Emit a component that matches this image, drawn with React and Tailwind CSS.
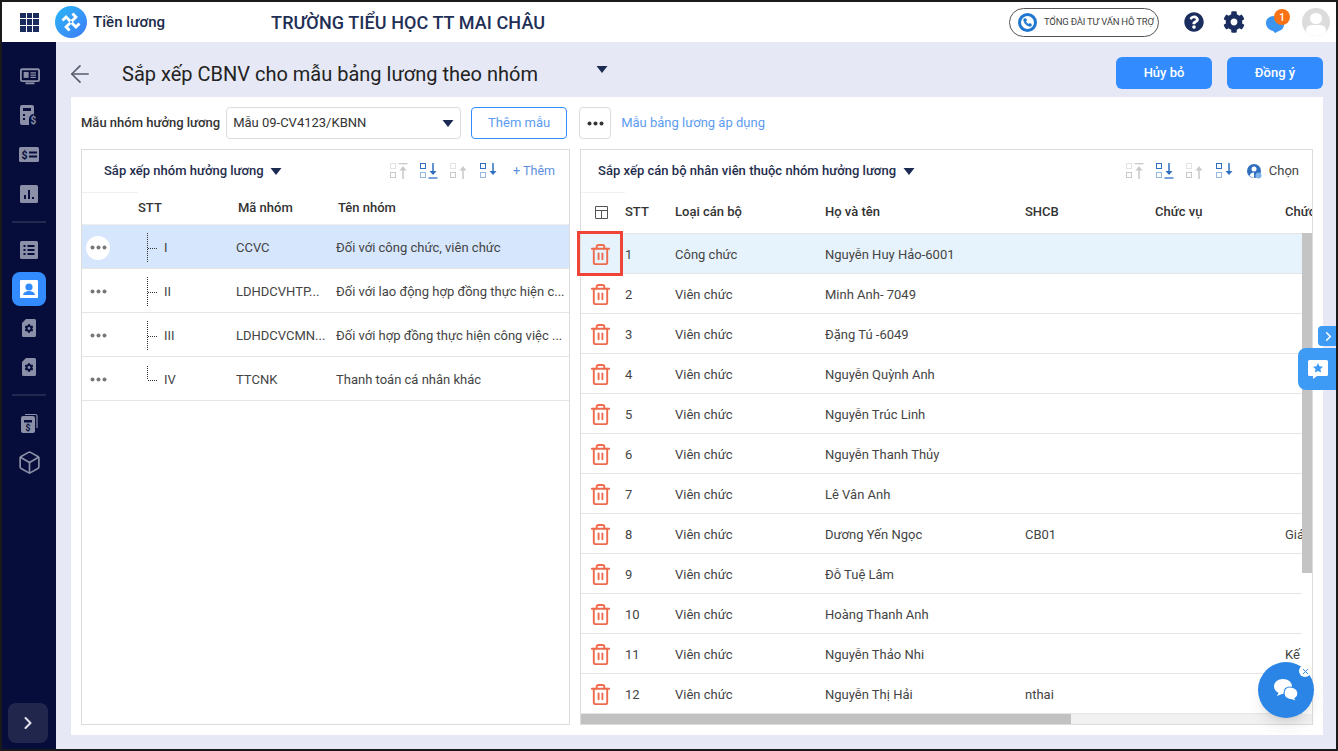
import React from "react";
import { Trash2, ArrowLeft, ChevronRight, Box, Phone, X } from "lucide-react";
import { FaCog, FaQuestionCircle } from "react-icons/fa";

const G = "#8b8fa8";
const D = "#060d3a";

function MonitorIcon() {
  return (
    <svg width="20" height="17" viewBox="0 0 22 18" className="ml-[1px]">
      <rect x="1" y="1" width="20" height="13" rx="1.5" fill="none" stroke={G} strokeWidth="2" />
      <rect x="4" y="4" width="5.5" height="6.5" fill={G} />
      <path d="M11.5 5h6M11.5 7.5h6M11.5 10h6" stroke={G} strokeWidth="1.5" />
      <rect x="6" y="15.5" width="10" height="2" fill={G} />
    </svg>
  );
}
function CalcIcon() {
  return (
    <svg width="18" height="20" viewBox="0 0 18 20">
      <path d="M2 0h10a2 2 0 0 1 2 2v7a5 5 0 0 0-5 5v6H2a2 2 0 0 1-2-2V2a2 2 0 0 1 2-2z" fill={G} />
      <rect x="3" y="3" width="8" height="3" fill={D} />
      <rect x="3" y="9" width="2" height="2" fill={D} />
      <rect x="3" y="13" width="2" height="2" fill={D} />
      <text x="10.5" y="19" fontSize="10" fontWeight="700" fill={G} fontFamily="Roboto, sans-serif">$</text>
    </svg>
  );
}
function CashIcon() {
  return (
    <svg width="20" height="15" viewBox="0 0 20 15">
      <rect width="20" height="15" rx="1.5" fill={G} />
      <text x="2.5" y="12" fontSize="10.5" fontWeight="700" fill={D} fontFamily="Roboto, sans-serif">$</text>
      <path d="M10 5.5h8M10 9.5h8" stroke={D} strokeWidth="2" />
    </svg>
  );
}
function ChartIcon() {
  return (
    <svg width="18" height="18" viewBox="0 0 18 18">
      <rect width="18" height="18" rx="1.5" fill={G} />
      <path d="M5 10v4M9 5v9M13 12v2" stroke={D} strokeWidth="2" />
    </svg>
  );
}
function ListIcon() {
  return (
    <svg width="18" height="18" viewBox="0 0 18 18">
      <rect width="18" height="18" rx="1.5" fill={G} />
      <path d="M3.5 5h2M7.5 5h7M3.5 9h2M7.5 9h7M3.5 13h2M7.5 13h7" stroke={D} strokeWidth="1.8" />
    </svg>
  );
}
function PersonIcon() {
  return (
    <svg width="18" height="18" viewBox="0 0 18 18">
      <rect width="18" height="18" rx="1" fill="#fff" />
      <circle cx="9" cy="7" r="3.6" fill="#338cff" />
      <path d="M3 15c.6-3 3-4 6-4s5.400 1 6 4z" fill="#338cff" />
    </svg>
  );
}
function FileGear() {
  return (
    <svg width="14" height="18" viewBox="0 0 14 18">
      <path d="M4 0h8.500a1.500 1.500 0 0 1 1.500 1.500v15a1.500 1.500 0 0 1-1.500 1.500h-11A1.500 1.500 0 0 1 0 16.500V4z" fill={G} />
      <FaCog x="2.500" y="5" size={9} color={D} />
    </svg>
  );
}
function WalletIcon() {
  return (
    <svg width="17" height="20" viewBox="0 0 17 20">
      <path d="M4 1.500h10.500a1.500 1.500 0 0 1 1.500 1.500v12" fill="none" stroke={G} strokeWidth="1.200" />
      <rect x="0" y="3" width="14" height="17" rx="2" fill={G} />
      <rect x="3" y="7" width="8" height="2.500" fill={D} />
      <text x="4.500" y="18" fontSize="8.500" fontWeight="700" fill={D} fontFamily="Roboto, sans-serif">$</text>
    </svg>
  );
}

function SortIcon({ kind }) {
  const on = kind === "bottom" || kind === "down";
  const c = on ? "#2f6fc0" : "#c9c9c9";
  const topDashed = !on;
  const down = on;
  const bar = kind === "top" || kind === "bottom";
  return (
    <svg width="18" height="16" viewBox="0 0 18 16">
      <rect x="0.500" y="0.500" width="5" height="5" fill="none" stroke={c} strokeDasharray={topDashed ? "1 1" : undefined} />
      <rect x="0.500" y="9.500" width="5" height="5" fill="none" stroke={c} strokeDasharray={on ? "1 1" : undefined} />
      {down ? (
        <g>
          <path d="M13 0v10.500" stroke={c} strokeWidth="1.500" />
          <path d="M9.500 8h7L13 12z" fill={c} />
          {bar && <path d="M8.500 15h9" stroke={c} strokeWidth="1.300" />}
        </g>
      ) : (
        <g>
          <path d="M13 5v11" stroke={c} strokeWidth="1.500" />
          <path d="M9.500 7.500h7L13 3z" fill={c} />
          {bar && <path d="M8.500 0.700h9" stroke={c} strokeWidth="1.300" />}
        </g>
      )}
    </svg>
  );
}

function Caret({ className = "" }) {
  return (
    <svg width="12" height="7" viewBox="0 0 12 7" className={className}>
      <path d="M0.500 0h11L6 7z" fill="#1b2b52" />
    </svg>
  );
}

function Dots({ dark }) {
  const f = dark ? "#333" : "#777";
  return (
    <svg width="17" height="5" viewBox="0 0 17 5">
      <circle cx="2.500" cy="2.500" r="2" fill={f} />
      <circle cx="8.500" cy="2.500" r="2" fill={f} />
      <circle cx="14.500" cy="2.500" r="2" fill={f} />
    </svg>
  );
}

function SideItem({ children, active }) {
  return (
    <div className={active ? "w-[34px] h-[34px] rounded-lg bg-[#338cff] flex items-center justify-center my-[2.500px] shrink-0" : "w-[34px] h-[39.300px] flex items-center justify-center shrink-0"}>
      {children}
    </div>
  );
}
function SideDivider() {
  return <div className="w-[34px] h-[2px] bg-[#23284f] my-[7.250px] shrink-0" />;
}

function Sidebar() {
  return (
    <aside className="w-[54px] shrink-0 bg-[#060d3a] flex flex-col items-center pt-[14.500px] pb-[6px]">
      <SideItem><MonitorIcon /></SideItem>
      <SideItem><CalcIcon /></SideItem>
      <SideItem><CashIcon /></SideItem>
      <SideItem><ChartIcon /></SideItem>
      <SideDivider />
      <SideItem><ListIcon /></SideItem>
      <SideItem active><PersonIcon /></SideItem>
      <SideItem><FileGear /></SideItem>
      <SideItem><FileGear /></SideItem>
      <SideDivider />
      <SideItem><WalletIcon /></SideItem>
      <SideItem><Box size={25} color={G} strokeWidth={1.600} /></SideItem>
      <div className="mt-auto self-start ml-[6px] w-10 h-10 rounded-lg bg-[#21264d] flex items-center justify-center">
        <ChevronRight size={20} color="#dfe0e8" strokeWidth={2.500} />
      </div>
    </aside>
  );
}

function Header() {
  return (
    <header className="h-10 shrink-0 bg-white flex items-center pl-[18px] pr-[6px]">
      <div className="grid grid-cols-3 gap-[1px] w-[19px] h-[19px]">
        {Array.from({ length: 9 }).map((_, i) => (
          <div key={i} className="bg-[#1a2b5e]" />
        ))}
      </div>
      <div className="ml-[16px] w-8 h-8 rounded-full bg-gradient-to-br from-[#29b6f6] to-[#3d7bf7] flex items-center justify-center">
        <svg width="24" height="24" viewBox="0 0 24 24">
          <g transform="rotate(45 12 12)" fill="none" stroke="#fff" strokeWidth="2.800">
            <path d="M12 11V5H7" />
            <path d="M12 11V5H7" transform="rotate(90 12 12)" />
            <path d="M12 11V5H7" transform="rotate(180 12 12)" />
            <path d="M12 11V5H7" transform="rotate(270 12 12)" />
          </g>
        </svg>
      </div>
      <span className="ml-[6px] text-[15px] font-medium text-[#1a2b4a] tracking-[0.050px]">Tiền lương</span>
      <span className="ml-[106px] text-[18px] font-medium text-[#1f2f55] tracking-[0.080px]">TRƯỜNG TIỂU HỌC TT MAI CHÂU</span>
      <div className="ml-auto w-[150px] h-[29px] rounded-full border border-[#555] flex items-center pl-2">
        <div className="w-[19px] h-[19px] rounded-full border-[3px] border-[#1f77d0] flex items-center justify-center">
          <Phone size={9} color="#1f77d0" fill="#1f77d0" />
        </div>
        <span className="ml-[7px] text-[9.500px] text-[#444] whitespace-nowrap tracking-[-0.200px]">TỔNG ĐÀI TƯ VẤN HỖ TRỢ</span>
      </div>
      <FaQuestionCircle size={20} color="#1a2d5e" className="ml-[25px]" />
      <FaCog size={22} color="#1a2d5e" className="ml-[19px]" />
      <div className="relative ml-[20px] w-[20px] h-[20px]">
        <svg width="20" height="20" viewBox="0 0 20 20" className="mt-[2px]">
          <path d="M9 2c5 0 10 2 10 8 0 4-2 6-5 7l-4 2-2-2C4 16 1 13 1 9c0-4 3-7 8-7z" fill="#3b95f0" />
        </svg>
        <div className="absolute -top-[3px] left-[9px] w-4 h-4 rounded-full bg-[#f97316] text-white text-[10px] font-medium flex items-center justify-center">1</div>
      </div>
      <div className="ml-[17px] w-[28px] h-[28px] rounded-full bg-[#dcdcdc] overflow-hidden flex flex-col items-center">
        <div className="w-[12px] h-[12px] rounded-full bg-white mt-[5px]" />
        <div className="w-[20px] h-[12px] rounded-full bg-white mt-[1px]" />
      </div>
    </header>
  );
}

function Tree({ last }) {
  return (
    <svg width="16" height="30" viewBox="0 0 16 30" className="shrink-0">
      <path d={last ? "M1.500 1v14" : "M1.500 0v29"} stroke="#333" strokeDasharray="1 1" />
      <path d="M2 15.500h10" stroke="#333" strokeDasharray="1 1" />
    </svg>
  );
}

const groups = [
  ["I", "CCVC", "Đối với công chức, viên chức"],
  ["II", "LDHDCVHTP...", "Đối với lao động hợp đồng thực hiện c..."],
  ["III", "LDHDCVCMN...", "Đối với hợp đồng thực hiện công việc ..."],
  ["IV", "TTCNK", "Thanh toán cá nhân khác"],
];

function Toolbar({ children }) {
  return (
    <div className="flex items-center gap-[12px]">
      <SortIcon kind="top" />
      <SortIcon kind="bottom" />
      <SortIcon kind="up" />
      <SortIcon kind="down" />
      {children}
    </div>
  );
}

function LeftPanel() {
  return (
    <section className="w-[489px] shrink-0 h-[576px] border border-[#dcdcdc] flex flex-col">
      <div className="h-[42px] flex items-center pl-[22px] pr-[14px]">
        <span className="text-[13px] font-medium text-[#1f2d4d]">Sắp xếp nhóm hưởng lương</span>
        <Caret className="ml-[6px]" />
        <div className="ml-auto">
          <Toolbar>
            <span className="ml-[3px] text-[12.500px] text-[#5c8fe0]">+ Thêm</span>
          </Toolbar>
        </div>
      </div>
      <div className="h-[33px] flex items-center text-[13px] font-medium text-[#333] border-b border-[#eeeeee]">
        <div className="w-[56px] h-full border-t border-[#f0f0f0]" />
        <div className="w-[100px]">STT</div>
        <div className="w-[100px]">Mã nhóm</div>
        <div>Tên nhóm</div>
      </div>
      {groups.map((g, i) => (
        <div key={g[0]} className={"h-[44px] pt-[2px] flex items-center text-[13px] text-[#444] border-b border-[#e5e5e5] " + (i === 0 ? "bg-[#d5e6fd]" : "bg-white")}>
          <div className="w-[56px] pl-[4px]">
            <div className={"w-6 h-6 rounded-full flex items-center justify-center " + (i === 0 ? "bg-white" : "")}>
              <Dots />
            </div>
          </div>
          <div className="w-[98px] flex items-center pl-[8px]">
            <Tree last={i === 3} />
            <span className="ml-[2px]">{g[0]}</span>
          </div>
          <div className="w-[100px]">{g[1]}</div>
          <div className="whitespace-nowrap">{g[2]}</div>
        </div>
      ))}
    </section>
  );
}

const staff = [
  ["1", "Công chức", "Nguyễn Huy Hảo-6001", "", ""],
  ["2", "Viên chức", "Minh Anh- 7049", "", ""],
  ["3", "Viên chức", "Đặng Tú -6049", "", ""],
  ["4", "Viên chức", "Nguyễn Quỳnh Anh", "", ""],
  ["5", "Viên chức", "Nguyễn Trúc Linh", "", ""],
  ["6", "Viên chức", "Nguyễn Thanh Thủy", "", ""],
  ["7", "Viên chức", "Lê Vân Anh", "", ""],
  ["8", "Viên chức", "Dương Yến Ngọc", "CB01", "Giáo viên"],
  ["9", "Viên chức", "Đỗ Tuệ Lâm", "", ""],
  ["10", "Viên chức", "Hoàng Thanh Anh", "", ""],
  ["11", "Viên chức", "Nguyễn Thảo Nhi", "", "Kế toán"],
  ["12", "Viên chức", "Nguyễn Thị Hải", "nthai", ""],
];

function RightPanel() {
  return (
    <section className="relative w-[733px] shrink-0 h-[576px] border border-[#dcdcdc]">
      <div className="relative w-full h-full flex flex-col overflow-hidden">
        <div className="h-[42px] shrink-0 flex items-center pl-[17px] pr-[13px]">
          <span className="text-[13px] font-medium text-[#1f2d4d] tracking-[0.020px]">Sắp xếp cán bộ nhân viên thuộc nhóm hưởng lương</span>
          <Caret className="ml-[7px]" />
          <div className="ml-auto flex items-center">
            <Toolbar>
              <div className="ml-[1px] flex items-center gap-[7px]">
                <svg width="15" height="15" viewBox="0 0 15 15">
                  <circle cx="7" cy="7" r="7" fill="#2f6fc0" />
                  <circle cx="7" cy="5" r="2.500" fill="#fff" />
                  <path d="M2.500 12c.5-2.500 2.500-3.500 4.500-3.500V14z" fill="#fff" />
                  <circle cx="11.500" cy="11.500" r="3" fill="#7db3ea" />
                </svg>
                <span className="text-[13px] text-[#444]">Chọn</span>
              </div>
            </Toolbar>
          </div>
        </div>
        <div className="h-[42px] shrink-0 pb-[2px] flex items-center text-[13px] font-medium text-[#333] border-b border-[#e5e5e5] whitespace-nowrap">
          <div className="w-[44px] shrink-0 h-full flex items-center pl-[14px] border-t border-[#f0f0f0]">
            <svg width="13" height="13" viewBox="0 0 13 13">
              <path d="M.5.500h12v12H.500zM.5 4.500h12M6.500 4.500v8" fill="none" stroke="#555" />
            </svg>
          </div>
          <div className="w-[50px] shrink-0">STT</div>
          <div className="w-[150px] shrink-0">Loại cán bộ</div>
          <div className="w-[200px] shrink-0">Họ và tên</div>
          <div className="w-[130px] shrink-0">SHCB</div>
          <div className="w-[130px] shrink-0">Chức vụ</div>
          <div className="w-[100px] shrink-0">Chức danh</div>
        </div>
        {staff.map((s, i) => (
          <div key={s[0]} className={"h-[40px] shrink-0 pt-[2px] flex items-center text-[13px] text-[#444] border-b border-[#e5e5e5] whitespace-nowrap " + (i === 0 ? "bg-[#e6f3fd]" : "bg-white")}>
            <div className="w-[44px] shrink-0 flex items-center pl-[8px]">
              <Trash2 size={23} color="#ee6c4d" strokeWidth={2} />
            </div>
            <div className="w-[50px] shrink-0">{s[0]}</div>
            <div className="w-[150px] shrink-0">{s[1]}</div>
            <div className="w-[200px] shrink-0">{s[2]}</div>
            <div className="w-[130px] shrink-0">{s[3]}</div>
            <div className="w-[130px] shrink-0" />
            <div className="w-[100px] shrink-0">{s[4]}</div>
          </div>
        ))}
        <div className="absolute right-0 top-[83px] bottom-[10px] w-[10px] bg-white">
          <div className="h-[340px] bg-[#c4c4c4]" />
        </div>
        <div className="absolute left-0 right-0 bottom-0 h-[10px] bg-[#f1f1f1]">
          <div className="w-[490px] h-full bg-[#c1c1c1]" />
        </div>
      </div>
      <div className="absolute left-[-4px] top-[81px] w-[46px] h-[45px] border-[3px] border-[#f04438]" />
    </section>
  );
}

export default function App() {
  return (
    <div className="relative w-[1338px] h-[751px] overflow-hidden border-2 border-[#1a1a1a] flex flex-col font-['Roboto',sans-serif]">
      <Header />
      <div className="flex-1 flex min-h-0">
        <Sidebar />
        <main className="flex-1 bg-[#e6e9f5] flex flex-col pl-[15px] pr-[13px] pb-[14px]">
          <div className="h-[55px] shrink-0 pt-[8px] flex items-center">
            <ArrowLeft size={28} color="#555c6e" strokeWidth={1.400} className="-ml-[5px]" />
            <h1 className="ml-[28px] text-[20px] font-normal text-[#222] whitespace-nowrap">Sắp xếp CBNV cho mẫu bảng lương theo nhóm</h1>
            <Caret className="ml-[58px] -mt-[9px]" />
            <div className="ml-auto -mt-[1px] flex gap-[15px]">
              <button className="w-[96px] h-8 rounded-md bg-[#338cff] text-white text-[13px] font-medium">Hủy bỏ</button>
              <button className="w-[96px] h-8 rounded-md bg-[#338cff] text-white text-[13px] font-medium">Đồng ý</button>
            </div>
          </div>
          <div className="flex-1 bg-white px-[10px] pt-[10px] flex flex-col min-h-0">
            <div className="h-8 shrink-0 flex items-center">
              <span className="text-[13px] font-medium text-[#333] whitespace-nowrap">Mẫu nhóm hưởng lương</span>
              <div className="ml-[6px] w-[235px] h-8 rounded border border-[#dcdcdc] flex items-center pl-[6px] pr-[6px] text-[13px] text-[#333]">
                <span>Mẫu 09-CV4123/KBNN</span>
                <Caret className="ml-auto" />
              </div>
              <button className="ml-[10px] w-[96px] h-8 rounded border border-[#338cff] text-[#5c9cf0] text-[13px]">Thêm mẫu</button>
              <button className="ml-3 w-8 h-8 rounded border border-[#dcdcdc] flex items-center justify-center">
                <Dots dark />
              </button>
              <span className="ml-[10px] text-[13px] text-[#5c9cf0]">Mẫu bảng lương áp dụng</span>
            </div>
            <div className="mt-[10px] flex gap-[10px]">
              <LeftPanel />
              <RightPanel />
            </div>
          </div>
        </main>
      </div>
      <div className="absolute right-[-2px] top-[324px] w-5 h-[20px] rounded-l bg-[#3d9bf5] flex items-center justify-center">
        <ChevronRight size={15} color="#fff" strokeWidth={2.500} />
      </div>
      <div className="absolute right-[-2px] top-[346px] w-[40px] h-[42px] rounded-l-lg bg-[#3d9bf5] flex items-center justify-center">
        <svg width="20" height="19" viewBox="0 0 20 19">
          <path d="M1.500 0h17A1.500 1.500 0 0 1 20 1.500v13a1.500 1.500 0 0 1-1.500 1.500H9l-4 3v-3H1.500A1.500 1.500 0 0 1 0 14.500v-13A1.500 1.500 0 0 1 1.500 0z" fill="#fff" />
          <path d="M10 3l1.500 3.300 3.500.4-2.600 2.400.7 3.500L10 10.900l-3.100 1.700.7-3.500L5 6.700l3.500-.4z" fill="#3d9bf5" />
        </svg>
      </div>
      <div className="absolute left-[1256px] top-[660px] w-14 h-14 rounded-full bg-[#2b85e6] shadow-lg flex items-center justify-center">
        <svg width="26" height="24" viewBox="0 0 26 24">
          <path d="M10 1c5 0 9 3 9 7.500S15 16 10 16l-1 0-5 2 1.500-3.200C3 13.500 1 11.300 1 8.500 1 4 5 1 10 1z" fill="#fff" />
          <path d="M17 9c4.500 0 8 2.500 8 6.500 0 2.300-1.200 4-3 5l1.500 3-4.500-1.700c-4.500 0-8-2.800-8-6.300S12.500 9 17 9z" fill="#fff" stroke="#2b85e6" strokeWidth="1.200" />
        </svg>
        <div className="absolute right-[3px] top-[3px] w-3 h-3 rounded-full bg-white flex items-center justify-center">
          <X size={9} color="#2b85e6" strokeWidth={2.500} />
        </div>
      </div>
    </div>
  );
}
